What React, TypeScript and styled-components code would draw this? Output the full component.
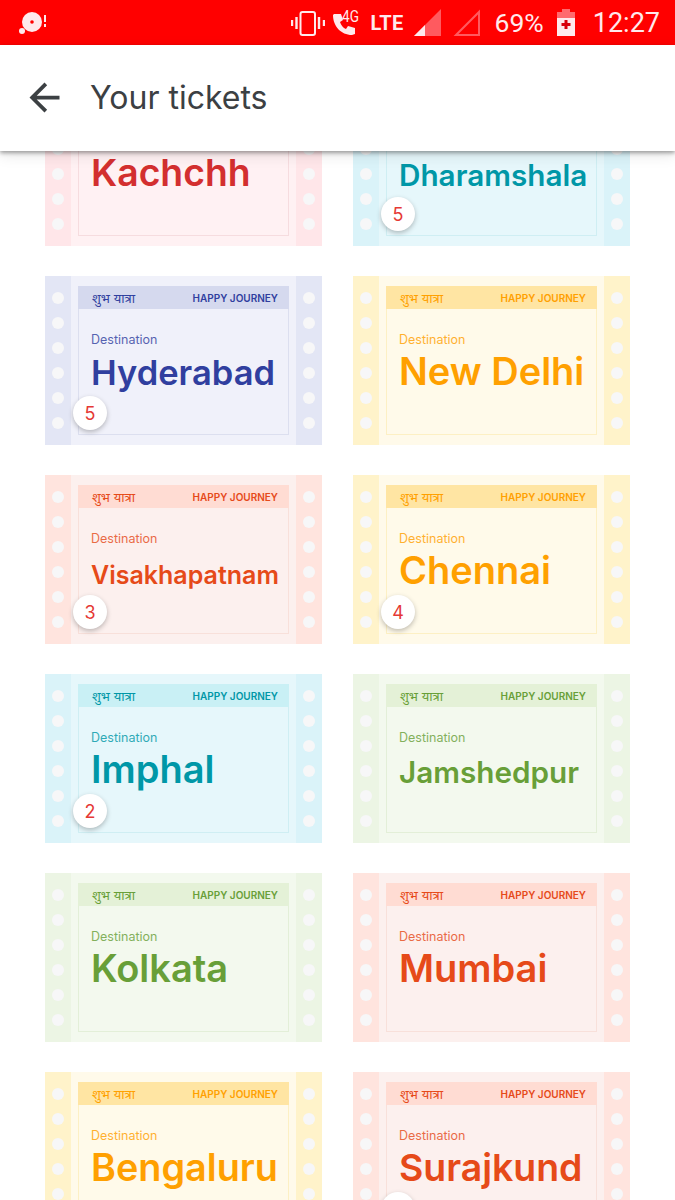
import { FC } from "react"
import { MdArrowBack } from "react-icons/md"
import styled, { createGlobalStyle } from "styled-components"

type Tone = "red" | "indigo" | "yellow" | "orange" | "cyan" | "green"

type TicketData = {
	city: string
	tone: Tone
	size: number
	count?: number
}

const tones: Record<Tone, { strip: string; body: string; head: string; line: string; text: string }> = {
	red: { strip: "#ffe6e9", body: "#fff1f3", head: "#ffdfe3", line: "#f6dcdf", text: "#d32f2f" },
	indigo: { strip: "#e3e6f5", body: "#f0f1fa", head: "#d5d9ee", line: "#dcdfef", text: "#303f9f" },
	yellow: { strip: "#fff3ca", body: "#fffaea", head: "#ffe5a3", line: "#fdf0c4", text: "#ffa000" },
	orange: { strip: "#ffe4de", body: "#fcf0ee", head: "#ffdcd3", line: "#f8e0da", text: "#e64a19" },
	cyan: { strip: "#daf3f9", body: "#e6f7fb", head: "#c9f0f5", line: "#cfeef3", text: "#0097a7" },
	green: { strip: "#ecf5e4", body: "#f3f9ee", head: "#e4f1d7", line: "#e3efd8", text: "#689f38" },
}

const tickets: TicketData[] = [
	{ city: "Kachchh", tone: "red", size: 37.3 },
	{ city: "Dharamshala", tone: "cyan", size: 29.7, count: 5 },
	{ city: "Hyderabad", tone: "indigo", size: 34.5, count: 5 },
	{ city: "New Delhi", tone: "yellow", size: 38 },
	{ city: "Visakhapatnam", tone: "orange", size: 25, count: 3 },
	{ city: "Chennai", tone: "yellow", size: 38, count: 4 },
	{ city: "Imphal", tone: "cyan", size: 38, count: 2 },
	{ city: "Jamshedpur", tone: "green", size: 29.7 },
	{ city: "Kolkata", tone: "green", size: 38 },
	{ city: "Mumbai", tone: "orange", size: 38 },
	{ city: "Bengaluru", tone: "yellow", size: 37.8 },
	{ city: "Surajkund", tone: "orange", size: 37.4, count: 1 },
]

const holes = [0, 1, 2, 3, 4, 5]

const App: FC = () => {
	return (
		<Screen>
			<GlobalStyle />
			<StatusBar>
				<StatusLeft>
					<svg width="28" height="24" viewBox="0 0 28 24">
						<circle cx="13" cy="11" r="10" fill="#ffe9ec" />
						<circle cx="13" cy="11" r="1.8" fill="#f00" />
						<circle cx="3" cy="20" r="3" fill="#ffe9ec" />
						<rect x="25" y="4" width="2" height="7" fill="#ffe9ec" />
						<rect x="25" y="13" width="2" height="3" fill="#ffe9ec" />
					</svg>
				</StatusLeft>
				<StatusRight>
					<svg width="34" height="26" viewBox="0 0 34 26" fill="none" stroke="#ffe9ec">
						<rect x="9.5" y="2" width="14.5" height="23" rx="2" strokeWidth="2" />
						<path d="M5.5 7v12M1 10v6M28 7v12M33 10v6" strokeWidth="2.4" />
					</svg>
					<PhoneSlot>
						<svg width="24" height="24" viewBox="0 0 24 24">
							<path d="M1 3c0 11 8 20 19 20l3-1v-6l-7-2-2 3c-3-1-5-4-6-7l3-2-2-6H2z" fill="#ffe9ec" />
						</svg>
						<FourG>4G</FourG>
					</PhoneSlot>
					<Lte>LTE</Lte>
					<svg width="27" height="27" viewBox="0 0 27 27">
						<path d="M0 27L27 0v27z" fill="#ff5a5f" />
						<path d="M0 27l11-11v11z" fill="#ffe9ec" />
					</svg>
					<SecondSignal width="27" height="27" viewBox="0 0 27 27">
						<path d="M3 26L26 3v23z" fill="none" stroke="#ff5a5f" strokeWidth="2" />
					</SecondSignal>
					<Percent>69%</Percent>
					<svg width="18" height="27" viewBox="0 0 18 27">
						<path d="M0 3h5V0h8v3h5v24H0z" fill="#ffe9ec" />
						<path d="M0 3h5V0h8v3h5v6H0z" fill="#ff6a6e" />
						<path d="M7.5 11h3v3h3v3h-3v3h-3v-3h-3v-3h3z" fill="#d8000c" />
					</svg>
					<Clock>12:27</Clock>
				</StatusRight>
			</StatusBar>
			<AppBar>
				<MdArrowBack size={45} />
				<PageTitle>Your tickets</PageTitle>
			</AppBar>
			<Scroller>
				<TicketGrid>
					{tickets.map(ticket => (
						<Ticket key={ticket.city} $tone={ticket.tone}>
							<Strip $tone={ticket.tone}>
								{holes.map(hole => (
									<Hole key={hole} />
								))}
							</Strip>
							<Panel $tone={ticket.tone}>
								<PanelHead $tone={ticket.tone}>
									<Hindi>शुभ यात्रा</Hindi>
									<Happy>HAPPY JOURNEY</Happy>
								</PanelHead>
								<PanelBody>
									<Destination>Destination</Destination>
									<City>
										<CityName $size={ticket.size}>{ticket.city}</CityName>
									</City>
								</PanelBody>
							</Panel>
							<Strip $tone={ticket.tone}>
								{holes.map(hole => (
									<Hole key={hole} />
								))}
							</Strip>
							{ticket.count && <Badge>{ticket.count}</Badge>}
						</Ticket>
					))}
				</TicketGrid>
			</Scroller>
		</Screen>
	)
}

const GlobalStyle = createGlobalStyle`
	html, body {
		margin: 0;
		padding: 0;
		background: #fff;
	}

	* {
		box-sizing: border-box;
	}
`

const Screen = styled.div`
	width: 675px;
	height: 1200px;
	overflow: hidden;
	display: flex;
	flex-direction: column;
	font-family: Inter, "Noto Sans", sans-serif;
	background: #fff;
`

const StatusBar = styled.div`
	height: 45px;
	flex: none;
	background: #f00;
	color: #ffe9ec;
	display: flex;
	align-items: center;
	justify-content: space-between;
	padding: 0 15px 0 19px;
	font-family: Roboto, sans-serif;
`

const StatusLeft = styled.div`
	display: flex;
	align-items: center;
`

const StatusRight = styled.div`
	display: flex;
	align-items: center;
`

const PhoneSlot = styled.div`
	position: relative;
	width: 38px;
	height: 26px;
	margin-left: 7px;
	display: flex;
	align-items: flex-end;
`

const FourG = styled.span`
	position: absolute;
	left: 10px;
	top: -1px;
	font-size: 16px;
	line-height: 16px;
	transform: scaleX(0.85);
	transform-origin: left;
`

const Lte = styled.span`
	font-size: 20px;
	line-height: 20px;
	font-weight: 700;
	letter-spacing: 0.3px;
	align-self: flex-start;
	margin: 6px 10px 0 0;
`

const SecondSignal = styled.svg`
	margin-left: 12px;
`

const Percent = styled.span`
	font-size: 26.5px;
	margin: 0 13px 0 15px;
`

const Clock = styled.span`
	font-size: 27px;
	margin-left: 18px;
`

const AppBar = styled.div`
	height: 106px;
	flex: none;
	background: #fff;
	display: flex;
	align-items: center;
	padding: 0 0 1px 22px;
	position: relative;
	z-index: 2;
	box-shadow: 0 2px 4px rgba(0, 0, 0, 0.35), 0 4px 14px rgba(0, 0, 0, 0.1);
	color: #3c4043;
`

const PageTitle = styled.h1`
	margin: 0 0 0 23px;
	font-size: 32px;
	font-weight: 400;
	color: #3c4043;
`

const Scroller = styled.div`
	flex: 1;
	overflow: hidden;
`

const TicketGrid = styled.div`
	display: grid;
	grid-template-columns: 277px 277px;
	grid-auto-rows: 169px;
	column-gap: 31px;
	row-gap: 30px;
	padding-left: 45px;
	margin-top: -74px;
`

const Ticket = styled.div<{ $tone: Tone }>`
	position: relative;
	display: flex;
	justify-content: space-between;
	background: ${props => tones[props.$tone].body};
	color: ${props => tones[props.$tone].text};
`

const Strip = styled.div<{ $tone: Tone }>`
	width: 26px;
	flex: none;
	background: ${props => tones[props.$tone].strip};
	display: flex;
	flex-direction: column;
	align-items: center;
	gap: 13px;
	padding-top: 16px;
`

const Hole = styled.span`
	width: 12px;
	height: 12px;
	border-radius: 50%;
	background: #f7f7f8;
`

const Panel = styled.div<{ $tone: Tone }>`
	width: 211px;
	margin: 10px 0;
	display: flex;
	flex-direction: column;
	border: 1px solid ${props => tones[props.$tone].line};
	border-top: none;
`

const PanelHead = styled.div<{ $tone: Tone }>`
	height: 23px;
	margin: 0 -1px;
	flex: none;
	display: flex;
	align-items: center;
	justify-content: space-between;
	padding: 0 11px 0 14px;
	background: ${props => tones[props.$tone].head};
`

const Hindi = styled.span`
	font-size: 13px;
`

const Happy = styled.span`
	font-size: 10px;
	font-weight: 600;
`

const PanelBody = styled.div`
	padding: 23px 0 0 12px;
`

const Destination = styled.div`
	font-size: 12.5px;
	line-height: 16px;
	opacity: 0.8;
`

const City = styled.div`
	font-size: 38px;
	font-weight: 600;
	line-height: 47px;
	white-space: nowrap;
`

const CityName = styled.span<{ $size: number }>`
	font-size: ${props => props.$size}px;
`

const Badge = styled.span`
	position: absolute;
	left: 28px;
	bottom: 15px;
	width: 34px;
	height: 34px;
	border-radius: 50%;
	background: #fff;
	color: #e53935;
	font-size: 18px;
	display: flex;
	align-items: center;
	justify-content: center;
	box-shadow: 0 2px 5px rgba(0, 0, 0, 0.25);
`

export default App
